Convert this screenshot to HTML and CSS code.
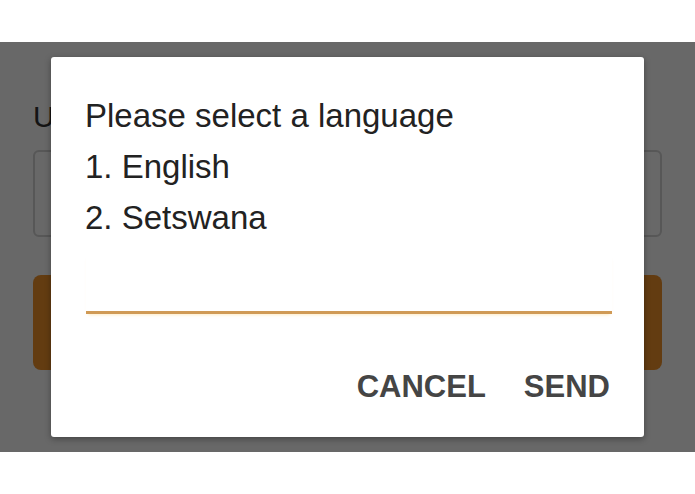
FILE: index.html
```html
<!DOCTYPE html>
<html lang="en">
<head>
<meta charset="utf-8">
<title>Select language</title>
<link rel="stylesheet" href="styles.css">
</head>
<body>
<div class="top-strip"></div>
<div class="stage">
  <div class="page">
    <div class="label">U</div>
    <div class="input-box"></div>
    <div class="primary-btn"></div>
  </div>
  <div class="dialog">
    <div class="message">
      <div>Please select a language</div>
      <div>1. English</div>
      <div>2. Setswana</div>
    </div>
    <div class="field"></div>
    <div class="actions">
      <span class="btn">CANCEL</span>
      <span class="btn">SEND</span>
    </div>
  </div>
</div>
</body>
</html>
```

FILE: styles.css
```css
html, body {
  margin: 0;
  padding: 0;
  background: #ffffff;
  font-family: "Liberation Sans", Arial, sans-serif;
}

.top-strip {
  height: 42px;
}

.stage {
  position: relative;
  height: 410px;
  background: #686868;
  overflow: hidden;
}

.page {
  padding: 57px 33px 0 33px;
  display: flex;
  flex-direction: column;
}

.label {
  font-size: 30px;
  line-height: 36px;
  color: #141414;
  margin-left: 0;
}

.input-box {
  margin-top: 15px;
  height: 83px;
  border: 2px solid #575757;
  border-radius: 6px;
}

.primary-btn {
  margin-top: 38px;
  height: 95px;
  background: #633c11;
  border-radius: 8px;
}

.dialog {
  position: absolute;
  left: 51px;
  top: 15px;
  width: 593px;
  box-sizing: border-box;
  padding: 33px 32px 32px 34px;
  background: #ffffff;
  border-radius: 3px;
  box-shadow: 0 2px 6px rgba(0, 0, 0, 0.35);
  display: flex;
  flex-direction: column;
}

.message {
  font-size: 33px;
  line-height: 51px;
  color: #222222;
}

.field {
  margin-top: 12px;
  margin-left: 1px;
  height: 56px;
  border-bottom: 3px solid #d09a55;
  box-shadow: 0 3px 3px -2px rgba(255, 200, 90, 0.35);
}

.actions {
  margin-top: 55px;
  display: flex;
  justify-content: flex-end;
  gap: 38px;
  padding-right: 2px;
}

.btn {
  font-size: 31px;
  line-height: 36px;
  font-weight: bold;
  color: #454545;
}
```
